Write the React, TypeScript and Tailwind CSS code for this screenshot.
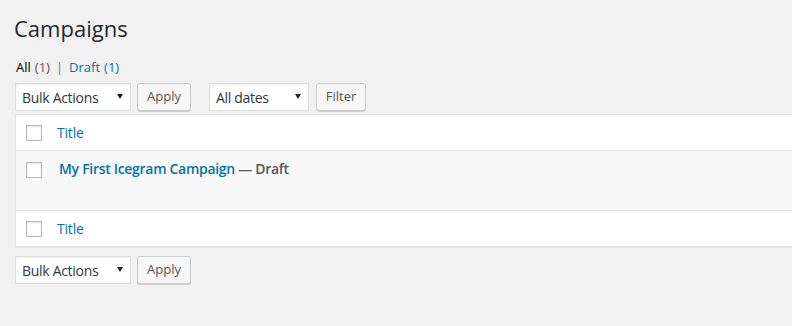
const font = { fontFamily: '"Open Sans", "Noto Sans", sans-serif' };

function Select({ label, width }: { label: string; width: string }) {
  return (
    <div
      className={`${width} h-[28px] bg-white border border-[#ddd] shadow-[inset_0_1px_2px_rgba(0,0,0,0.07)] flex items-center justify-between pl-[6px] pr-[6px] text-[14px] tracking-[-0.3px] text-[#32373c]`}
    >
      <span>{label}</span>
      <svg width="8" height="8" viewBox="0 0 8 8" className="mt-[-2px]">
        <path d="M1 2 L7 2 L4 7 Z" fill="#222" />
      </svg>
    </div>
  );
}

function Button({ label, width }: { label: string; width: string }) {
  return (
    <div
      className={`${width} h-[28px] bg-[#f7f7f7] border border-[#ccc] rounded-[3px] shadow-[0_1px_0_#ccc] flex items-center justify-center text-[13px] text-[#555]`}
    >
      {label}
    </div>
  );
}

function Checkbox() {
  return <div className="w-[16px] h-[16px] bg-white border border-[#b4b9be] shadow-[inset_0_1px_2px_rgba(0,0,0,0.1)]" />;
}

function HeadRow({ top }: { top?: boolean }) {
  return (
    <div className={`${top ? "h-[36px] border-b" : "h-[36px] border-t"} flex items-center bg-white border-[#e1e1e1]`}>
      <div className="w-[41px] pl-[10px]">
        <Checkbox />
      </div>
      <span className="text-[14px] tracking-[-0.2px] text-[#0073aa]">Title</span>
    </div>
  );
}

export default function App() {
  return (
    <div className="min-h-screen w-[792px] overflow-hidden bg-[#f1f1f1] pl-[15px] pt-[13px]" style={font}>
      <h1 className="text-[22px] leading-[30px] font-normal text-[#23282d] -ml-[1px]">Campaigns</h1>

      <div className="mt-[15px] h-[18px] text-[13px] leading-[18px] flex items-center text-[#555] pl-[1px]">
        <span className="text-black">All</span>
        <span className="ml-[4px]">(1)</span>
        <span className="mx-[6px] text-[#72777c]">|</span>
        <span className="text-[#0073aa]">Draft</span>
        <span className="ml-[4px] text-[#0073aa]">(1)</span>
      </div>

      <div className="mt-[7px] flex items-center">
        <Select label="Bulk Actions" width="w-[116px]" />
        <div className="ml-[6px]">
          <Button label="Apply" width="w-[54px]" />
        </div>
        <div className="ml-[18px]">
          <Select label="All dates" width="w-[100px]" />
        </div>
        <div className="ml-[7px]">
          <Button label="Filter" width="w-[50px]" />
        </div>
      </div>

      <div className="mt-[3px] w-[800px] border border-[#e5e5e5] shadow-[0_1px_1px_rgba(0,0,0,0.04)]">
        <HeadRow top />
        <div className="h-[59px] bg-[#f9f9f9] flex items-start pt-[11px]">
          <div className="w-[43px] pl-[10px]">
            <Checkbox />
          </div>
          <span className="text-[14px] font-semibold leading-[16px] tracking-[-0.3px] mt-[-1px]">
            <span className="text-[#0073aa]">My First Icegram Campaign</span>
            <span className="text-[#555]"> — Draft</span>
          </span>
        </div>
        <HeadRow />
      </div>

      <div className="mt-[9px] flex items-center">
        <Select label="Bulk Actions" width="w-[116px]" />
        <div className="ml-[6px]">
          <Button label="Apply" width="w-[54px]" />
        </div>
      </div>
    </div>
  );
}
